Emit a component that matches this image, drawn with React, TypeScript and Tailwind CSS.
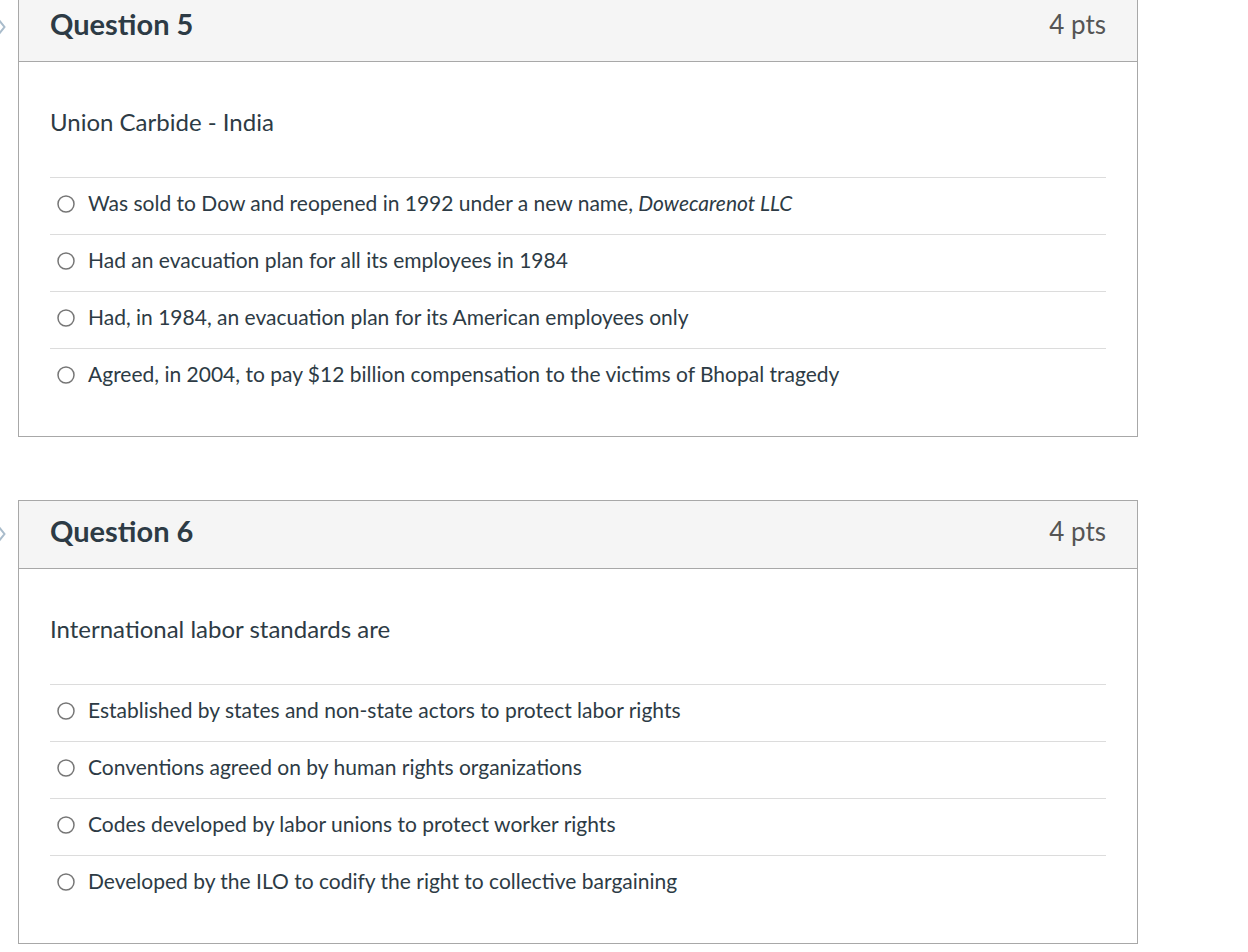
import React from "react";

type Answer = { text: React.ReactNode };

type Question = {
  title: string;
  points: string;
  prompt: string;
  answers: Answer[];
};

const QUESTIONS: Question[] = [
  {
    title: "Question 5",
    points: "4 pts",
    prompt: "Union Carbide - India",
    answers: [
      {
        text: (
          <>
            Was sold to Dow and reopened in 1992 under a new name, <em>Dowecarenot LLC</em>
          </>
        ),
      },
      { text: "Had an evacuation plan for all its employees in 1984" },
      { text: "Had, in 1984, an evacuation plan for its American employees only" },
      { text: "Agreed, in 2004, to pay $12 billion compensation to the victims of Bhopal tragedy" },
    ],
  },
  {
    title: "Question 6",
    points: "4 pts",
    prompt: "International labor standards are",
    answers: [
      { text: "Established by states and non-state actors to protect labor rights" },
      { text: "Conventions agreed on by human rights organizations" },
      { text: "Codes developed by labor unions to protect worker rights" },
      { text: "Developed by the ILO to codify the right to collective bargaining" },
    ],
  },
];

function Radio() {
  return (
    <svg width="18" height="18" viewBox="0 0 18 18" className="shrink-0 mt-[3px]">
      <circle cx="9" cy="9" r="8" fill="white" stroke="#767676" strokeWidth="1.5" />
    </svg>
  );
}

function QuestionCard({ q }: { q: Question }) {
  return (
    <div className="flex">
      {/* flag marker, mostly scrolled off the left edge */}
      <div className="w-[18px] h-[67px] flex items-center overflow-hidden shrink-0">
        <svg width="8" height="16" viewBox="0 0 8 16" className="-ml-[1px]">
          <path d="M0 1 L5.5 8 L0 15" fill="none" stroke="#a9bccb" strokeWidth="2" />
        </svg>
      </div>

      <div className="w-[1120px] border border-[#a8a8a8] bg-white">
        <div className="h-[68px] bg-[#f5f5f5] border-b border-[#a8a8a8] px-[31px] pb-[8px] flex items-center justify-between">
          <h2 className="text-[29px] font-bold text-[#2d3b45] leading-none">{q.title}</h2>
          <span className="text-[26px] text-[#555555] leading-none">{q.points}</span>
        </div>

        <div className="px-[31px] pt-[45px] pb-[31px]">
          <p className="text-[24px] leading-[30px] text-[#2d3b45]">{q.prompt}</p>
          <div className="mt-[40px]">
            {q.answers.map((a, i) => (
              <div key={i} className="h-[57px] border-t border-[#dcdcdc] flex items-center pl-[7px] gap-[13px] pb-[7px]">
                <Radio />
                <span className="text-[21px] text-[#2d3b45] leading-none">{a.text}</span>
              </div>
            ))}
          </div>
        </div>
      </div>
    </div>
  );
}

export default function App() {
  return (
    <div className="min-h-screen bg-white font-['Lato',sans-serif] overflow-hidden">
      <div className="-mt-[7px] flex flex-col gap-[63px]">
        {QUESTIONS.map((q) => (
          <QuestionCard key={q.title} q={q} />
        ))}
      </div>
    </div>
  );
}
